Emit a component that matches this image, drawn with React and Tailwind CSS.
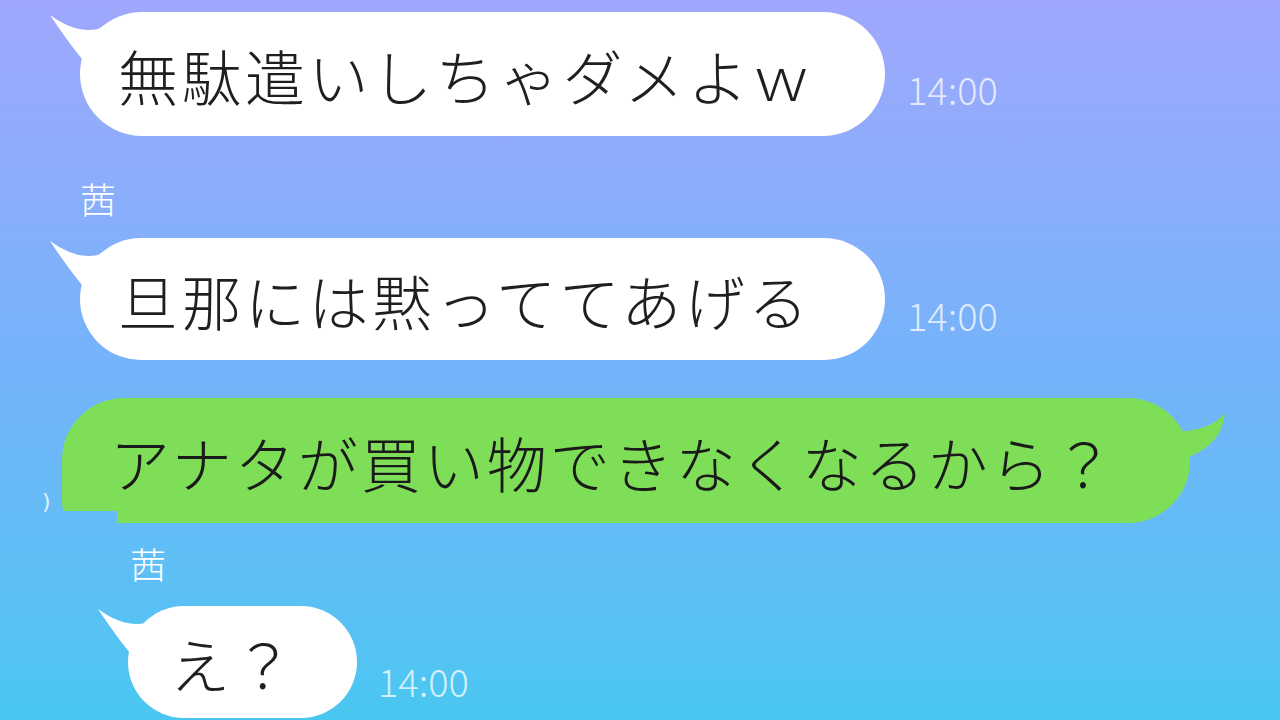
import React from "react";

const jp = "font-['Noto_Sans_CJK_JP','Noto_Sans_CJK_SC',sans-serif]";

function LeftTail() {
  return (
    <svg
      className="absolute left-[-32px] top-0 overflow-visible"
      width="70"
      height="60"
      viewBox="0 0 70 60"
    >
      <path d="M2 3 Q28 22 50 17 Q54 15 58 12 L62 60 L34 60 L34 47 Q20 30 2 3 Z" fill="#ffffff" />
    </svg>
  );
}

function RightTail({ color }) {
  return (
    <svg
      className="absolute right-[-40px] top-0 overflow-visible"
      width="60"
      height="70"
      viewBox="0 0 60 70"
    >
      <path d="M0 34 Q40 34 55 15 Q52 48 15 60 L0 60 Z" fill={color} />
    </svg>
  );
}

function Time({ className }) {
  return (
    <div className={`${jp} font-light text-[38px] leading-none text-white/75 ${className}`}>
      14:00
    </div>
  );
}

function Name({ className }) {
  return (
    <div className={`${jp} font-light text-[36px] leading-none text-white ${className}`}>
      茜
    </div>
  );
}

export default function App() {
  return (
    <div className="w-[1280px] h-[720px] overflow-hidden bg-linear-to-b from-[#9fa7fc] via-[#74b3fa] to-[#49c7f1] flex flex-col">
      {/* Message 1 */}
      <div className="flex items-end ml-[80px] mt-[12px]">
        <div className="relative w-[805px] h-[124px] bg-white rounded-full flex items-center pl-[38px]">
          <LeftTail />
          <span className={`${jp} font-light text-[60px] leading-none tracking-[3.5px] text-[#1f1f1f] relative mt-[2px]`}>
            無駄遣いしちゃダメよｗ
          </span>
        </div>
        <Time className="ml-[22px] mb-[28px]" />
      </div>

      <Name className="ml-[80px] mt-[44px]" />

      {/* Message 2 */}
      <div className="flex items-end ml-[80px] mt-[22px]">
        <div className="relative w-[805px] h-[122px] bg-white rounded-full flex items-center pl-[38px]">
          <LeftTail />
          <span className={`${jp} font-light text-[60px] leading-none tracking-[3.5px] text-[#1f1f1f] relative mt-[2px]`}>
            旦那には黙っててあげる
          </span>
        </div>
        <Time className="ml-[22px] mb-[26px]" />
      </div>

      {/* Message 3 (green, right) */}
      <div className="flex mt-[38px]">
        <span className="self-end ml-[42px] mb-[10px] w-[20px] text-[22px] leading-none text-white/80 font-['DejaVu_Sans',sans-serif]">
          )
        </span>
        <div className="relative w-[1128px] h-[125px]">
          <div className="absolute inset-0 bg-[#7ede58] rounded-tl-[62px] rounded-bl-[20px] rounded-r-[62px] [clip-path:polygon(0_0,100%_0,100%_100%,55px_100%,55px_113px,0_113px)]" />
          <RightTail color="#7ede58" />
          <div className="relative h-full flex items-center pl-[48px]">
            <span className={`${jp} font-light text-[60px] leading-none tracking-[3px] text-[#1a1a1a] mt-[2px]`}>
              アナタが買い物できなくなるから？
            </span>
          </div>
        </div>
      </div>

      <Name className="ml-[130px] mt-[22px]" />

      {/* Message 4 */}
      <div className="flex items-end ml-[128px] mt-[25px]">
        <div className="relative w-[229px] h-[112px] bg-white rounded-full flex items-center pl-[42px]">
          <LeftTail />
          <span className={`${jp} font-light text-[60px] leading-none tracking-[3.5px] text-[#1f1f1f] relative mt-[2px]`}>
            え？
          </span>
        </div>
        <Time className="ml-[21px] mb-[18px]" />
      </div>
    </div>
  );
}
